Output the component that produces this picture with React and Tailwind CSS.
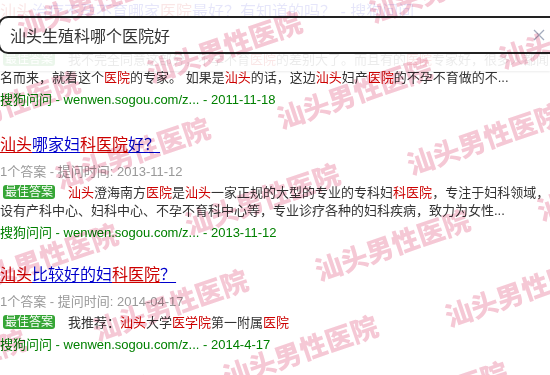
import React from "react";

// little helpers so keyword colouring stays readable
const R = ({ children }) => <span className="text-[#cc0000]">{children}</span>;
const TR = ({ children }) => (
  <span className="text-[#cc0000] underline decoration-[#cc0000] underline-offset-2">{children}</span>
);
const TB = ({ children }) => (
  <span className="text-[#0000cc] underline decoration-[#0000cc] underline-offset-2">{children}</span>
);

const Badge = () => (
  <span className="inline-block bg-[#36a636] text-white text-[12px] leading-[14px] px-[2px] rounded-[3px] mr-[13px] ml-[3px] align-[1px]">
    最佳答案
  </span>
);

const Source = ({ date }) => (
  <div className="mt-[3px] text-[13px] leading-[20px] text-[#008000] whitespace-nowrap">
    搜狗问问 - wenwen.sogou.com/z... - {date}
  </div>
);

const Meta = ({ date }) => (
  <div className="mt-[7px] text-[13px] leading-[20px] text-[#999999] whitespace-nowrap">
    1个答案 - 提问时间: {date}
  </div>
);

// tiled watermark, lattice read off the screenshot
const marks = [];
for (let i = -3; i <= 4; i++) {
  for (let j = -2; j <= 4; j++) {
    const x = 224 + i * 130 - j * 92;
    const y = 46 + i * 46 + j * 106;
    if (x > -120 && x < 680 && y > -60 && y < 440) marks.push({ x, y, k: i + "_" + j });
  }
}

export default function App() {
  return (
    <div className="relative w-[550px] h-[375px] overflow-hidden bg-white font-['Liberation_Sans','Noto_Sans_CJK_SC',sans-serif] text-[#333333]">
      <div className="pt-[2px]">
        {/* result 1, partly under the header */}
        <div className="mb-[25px]">
          <div className="text-[16px] leading-[20px] whitespace-nowrap">
            <TR>汕头</TR>
            <TB>治疗不孕不育哪家</TB>
            <TR>医院</TR>
            <TB>最好？有知道的吗？ - 搜狗问问</TB>
          </div>
          <Meta date="2011-11-18" />
          <div className="mt-[2px] text-[13px] leading-[18px] whitespace-nowrap">
            <Badge />
            我不完全同意这部分，不孕不育<R>医院</R>的差别大了。而且有的<R>医院</R>专家好，很多人都闻
          </div>
          <div className="text-[13px] leading-[18px] whitespace-nowrap">
            名而来，就看这个<R>医院</R>的专家。 如果是<R>汕头</R>的话，这边<R>汕头</R>妇产<R>医院</R>的不孕不育做的不...
          </div>
          <Source date="2011-11-18" />
        </div>

        {/* result 2 */}
        <div className="mb-[22px]">
          <div className="text-[16px] leading-[20px] whitespace-nowrap">
            <TR>汕头</TR>
            <TB>哪家妇</TB>
            <TR>科医院</TR>
            <TB>好？</TB>
          </div>
          <Meta date="2013-11-12" />
          <div className="mt-[2px] text-[13px] leading-[18px] whitespace-nowrap">
            <Badge />
            <R>汕头</R>澄海南方<R>医院</R>是<R>汕头</R>一家正规的大型的专业的专科妇<R>科医院</R>，专注于妇科领域，
          </div>
          <div className="text-[13px] leading-[18px] whitespace-nowrap">
            设有产科中心、妇科中心、不孕不育科中心等，专业诊疗各种的妇科疾病，致力为女性...
          </div>
          <Source date="2013-11-12" />
        </div>

        {/* result 3 */}
        <div>
          <div className="text-[16px] leading-[20px] whitespace-nowrap">
            <TR>汕头</TR>
            <TB>比较好的妇</TB>
            <TR>科医院</TR>
            <TB>？</TB>
          </div>
          <Meta date="2014-04-17" />
          <div className="mt-[2px] text-[13px] leading-[18px] whitespace-nowrap">
            <Badge />
            我推荐：<R>汕头</R>大学<R>医学院</R>第一附属<R>医院</R>
          </div>
          <Source date="2014-4-17" />
        </div>
      </div>

      {/* sticky search header over the list */}
      <div className="absolute inset-x-0 top-0 h-[71px] bg-white/90 shadow-[0_1px_2px_rgba(0,0,0,0.08)] pt-[16px]">
        <div className="ml-[-2px] mr-[-20px] h-[38px] border-2 border-[#222222] rounded-[10px] bg-white flex items-center justify-between pl-[10px] pr-[23px]">
          <span className="text-[16px] text-[#333333] font-['Noto_Sans_CJK_SC',sans-serif]">汕头生殖科哪个医院好</span>
          <svg width="12" height="12" viewBox="0 0 12 12">
            <path d="M1 1 L11 11 M11 1 L1 11" stroke="#a3abbd" strokeWidth="1.3" fill="none" />
          </svg>
        </div>
      </div>

      {/* watermark */}
      <div className="absolute inset-0 pointer-events-none mix-blend-multiply">
        {marks.map((m) => (
          <span
            key={m.k}
            className="absolute -translate-x-1/2 -translate-y-1/2 -rotate-[19deg] whitespace-nowrap text-[27px] leading-none font-black text-[#f5c8d5] font-['Noto_Sans_CJK_SC',sans-serif]"
            style={{ left: m.x, top: m.y }}
          >
            汕头男性医院
          </span>
        ))}
      </div>
    </div>
  );
}
